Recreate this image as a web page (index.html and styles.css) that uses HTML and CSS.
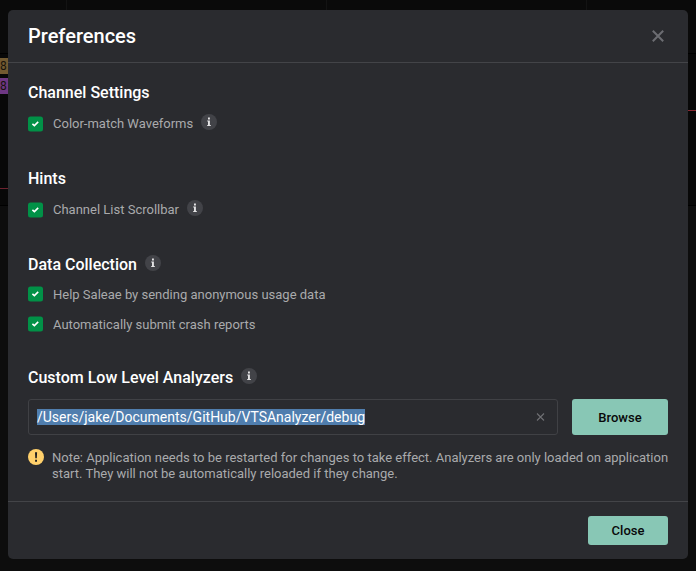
FILE: index.html
```
<!DOCTYPE html>
<html lang="en">
<head>
<meta charset="utf-8">
<title>Preferences</title>
<link rel="stylesheet" href="styles.css">
</head>
<body>
<svg class="symbols" aria-hidden="true">
  <symbol id="info" viewBox="0 0 16 16">
    <circle cx="8" cy="8" r="8" fill="#424348"/>
    <path d="M7 3.4h1.9v2H7zM6.2 6.6h2.7v4.4h.9V12H6.2v-1H7V7.6h-.8z" fill="#e4e4e5"/>
  </symbol>
  <symbol id="check" viewBox="0 0 15 16">
    <rect y=".5" width="15" height="15" rx="2.5" fill="#019147"/>
    <path d="M4.4 7.8l2 1.8 3.8-3.7" fill="none" stroke="#fff" stroke-width="1.6"/>
  </symbol>
</svg>
<div class="backdrop" aria-hidden="true">
  <div class="timeline"></div>
  <div class="tracks">
    <span class="tag tag-gold">8</span>
    <span class="tag tag-purple">8</span>
    <i class="wave wave-high"></i>
    <i class="wave wave-low"></i>
  </div>
  <div class="lower"></div>
</div>
<main class="modal">
  <header class="modal-header">
    <h1>Preferences</h1>
    <svg class="dismiss" viewBox="0 0 12 12"><path d="M.8.8l10.4 10.4M11.2.8L.8 11.2" fill="none" stroke="#6c6d72" stroke-width="2"/></svg>
  </header>
  <div class="modal-body">
    <section class="channel">
      <h2><span>Channel Settings</span></h2>
      <label class="option"><svg class="box"><use href="#check"/></svg><span>Color-match Waveforms</span><svg class="info"><use href="#info"/></svg></label>
    </section>
    <section class="hints">
      <h2><span>Hints</span></h2>
      <label class="option"><svg class="box"><use href="#check"/></svg><span>Channel List Scrollbar</span><svg class="info"><use href="#info"/></svg></label>
    </section>
    <section class="data">
      <h2><span>Data Collection</span><svg class="info"><use href="#info"/></svg></h2>
      <label class="option"><svg class="box"><use href="#check"/></svg><span>Help Saleae by sending anonymous usage data</span></label>
      <label class="option"><svg class="box"><use href="#check"/></svg><span>Automatically submit crash reports</span></label>
    </section>
    <section class="analyzers">
      <h2><span>Custom Low Level Analyzers</span><svg class="info"><use href="#info"/></svg></h2>
      <div class="path-row">
        <div class="field">
          <span class="selection">/Users/jake/Documents/GitHub/VTSAnalyzer/debug</span>
          <svg class="clear" viewBox="0 0 9 9"><path d="M1 .5l7 7M8 .5l-7 7" fill="none" stroke="#6f7074" stroke-width="1.1"/></svg>
        </div>
        <button class="browse">Browse</button>
      </div>
      <div class="note">
        <svg viewBox="0 0 16 16"><circle cx="8" cy="8" r="8" fill="#ffd06b"/><path d="M7 3.2h2.1l-.3 6H7.3zM7.1 10.8H9v1.9H7.1z" fill="#1d1d1f"/></svg>
        <p>Note: Application needs to be restarted for changes to take effect. Analyzers are only loaded on application<br>start. They will not be automatically reloaded if they change.</p>
      </div>
    </section>
  </div>
  <footer class="modal-footer"><button class="close">Close</button></footer>
</main>
</body>
</html>
```
FILE: styles.css
```
* { box-sizing: border-box; }
body {
  margin: 0;
  width: 696px;
  height: 571px;
  overflow: hidden;
  position: relative;
  background: #0d0d0d;
  font-family: Roboto, sans-serif;
  color: #fff;
}
h1, h2, p { margin: 0; font-weight: 500; }
svg { display: block; flex: none; }
.symbols { position: absolute; width: 0; height: 0; }
.backdrop { position: absolute; inset: 0; display: flex; flex-direction: column; }
.timeline {
  height: 54px;
  border-bottom: 1px solid #000;
  background: repeating-linear-gradient(90deg, #131313 0 1px, #0a0a0a 1px 260px) 66px 0;
}
.tracks { height: 152px; padding-top: 4px; border-bottom: 1px solid #000; background: #080808; position: relative; }
.tag { display: block; width: 12px; height: 16px; margin-bottom: 4px; font-size: 12px; line-height: 16px; color: #17130b; }
.tag-gold { background: #725a31; }
.tag-purple { background: #6e3783; }
.wave { position: absolute; height: 1px; width: 8px; background: #8b2932; }
.wave-high { right: 0; top: 56px; }
.wave-low { left: 0; top: 134px; background: #6d222e; }
.lower { flex: 1; }
.modal {
  position: absolute;
  left: 8px;
  top: 10px;
  width: 680px;
  height: 549px;
  display: flex;
  flex-direction: column;
  border-radius: 5px;
  background: #2a2b2f;
}
.modal-header {
  height: 53px;
  padding: 0 24px 0 20px;
  display: flex;
  align-items: center;
  justify-content: space-between;
  border-bottom: 1px solid #434448;
}
h1 { font-size: 20px; line-height: 24px; }
.dismiss { width: 12px; height: 12px; }
.modal-body { flex: 1; padding: 18px 20px 0; }
h2 { display: flex; gap: 8px; height: 24px; font-size: 16px; line-height: 24px; }
h2 .info { margin-top: 2px; }
.info { width: 16px; height: 16px; }
.option { display: flex; height: 30px; font-size: 13px; line-height: 16px; color: #a9aaac; }
.option span { margin-left: 10px; }
.option .info { margin: -2px 0 0 8px; }
.box { width: 15px; height: 16px; }
.channel, .hints { height: 86px; }
.channel .option, .hints .option { padding-top: 11px; }
.data { height: 113px; }
.data .option:nth-of-type(1) { padding-top: 10px; height: 40px; }
.data .box { margin-top: -1px; }
.path-row { display: flex; gap: 14px; margin-top: 9px; }
.field {
  width: 530px;
  height: 36px;
  padding: 0 12px 0 8px;
  display: flex;
  align-items: center;
  justify-content: space-between;
  border: 1px solid #404145;
  border-radius: 3px;
}
.selection { height: 16px; font-size: 14px; line-height: 16px; background: #507eae; }
.clear { width: 9px; height: 9px; }
button { border: 0; border-radius: 3px; padding: 0; background: #88c7b5; color: #08090a; font: 500 13px/16px Roboto, sans-serif; }
.browse { width: 96px; height: 36px; padding-top: 1px; }
.note { display: flex; gap: 8px; margin-top: 14px; font-size: 13px; line-height: 16px; color: #a9aaac; }
.note svg { width: 16px; height: 16px; }
.note p { font-weight: 400; padding-top: 1px; white-space: nowrap; }
.modal-footer { height: 58px; padding: 14px 20px; display: flex; justify-content: flex-end; border-top: 1px solid #434448; }
.close { width: 80px; height: 29px; }
```
